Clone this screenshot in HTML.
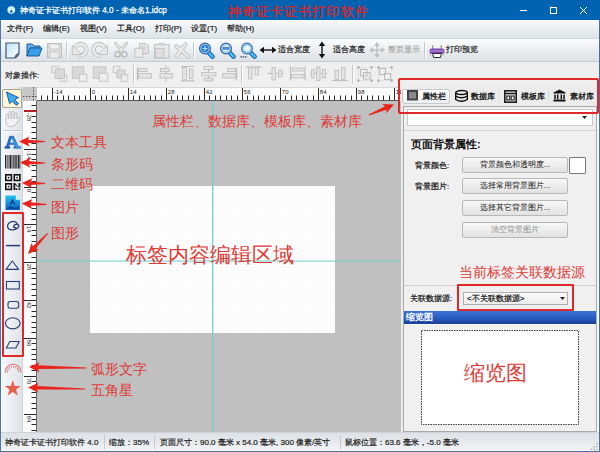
<!DOCTYPE html>
<html><head><meta charset="utf-8"><style>
*{margin:0;padding:0;box-sizing:border-box}
html,body{width:600px;height:452px;overflow:hidden;background:#f0f0f0;font-family:"Liberation Sans",sans-serif;color:#000}
.a{position:absolute}
.t{position:absolute;white-space:nowrap;line-height:1}
.red{color:#e2332d}
.u{-webkit-text-stroke:0.2px currentColor}
svg{position:absolute;overflow:visible}
</style></head><body>
<div class="a" style="left:0px;top:0px;width:600px;height:20px;background:#0063b1"></div>
<div class="a" style="left:0px;top:20px;width:1px;height:432px;background:#4f77a8"></div>
<div class="a" style="left:599px;top:20px;width:1px;height:432px;background:#45709f"></div>
<svg style="left:6px;top:4px" width="11" height="12" viewBox="0 0 11 12"><circle cx="5.3" cy="6" r="4.6" fill="#3f8fe0" opacity=".45"/><circle cx="5.3" cy="6" r="3.8" fill="#d6f3fd"/><path d="M5.3 5.2L7 8.4H3.6Z" fill="#1a5fae"/></svg>
<div class="t u" style="left:20px;top:6.6px;font-size:8.2px;color:#fff;-webkit-text-stroke:0.25px #fff">神奇证卡证书打印软件 4.0 - 未命名1.idcp</div>
<div class="t " style="left:228px;top:5.8px;font-size:12.8px;color:#cc2a30;letter-spacing:1.07px;-webkit-text-stroke:0.4px #cc2a30">神奇证卡证书打印软件</div>
<div class="a" style="left:520px;top:10px;width:7px;height:1px;background:#fff"></div>
<div class="a" style="left:550px;top:7px;width:7px;height:7px;border:1px solid #fff"></div>
<svg style="left:580px;top:7px" width="7" height="7" viewBox="0 0 7 7"><path d="M0 0L7 7M7 0L0 7" stroke="#fff" stroke-width="1"/></svg>
<div class="a" style="left:1px;top:20px;width:598px;height:19px;background:linear-gradient(#f7f9fb,#dfe4e8);border-bottom:1px solid #cfd5d9"></div>
<div class="t u" style="left:7px;top:25px;font-size:8px;color:#1a1a1a">文件(F)</div>
<div class="t u" style="left:43px;top:25px;font-size:8px;color:#1a1a1a">编辑(E)</div>
<div class="t u" style="left:80px;top:25px;font-size:8px;color:#1a1a1a">视图(V)</div>
<div class="t u" style="left:117px;top:25px;font-size:8px;color:#1a1a1a">工具(O)</div>
<div class="t u" style="left:155px;top:25px;font-size:8px;color:#1a1a1a">打印(P)</div>
<div class="t u" style="left:191px;top:25px;font-size:8px;color:#1a1a1a">设置(T)</div>
<div class="t u" style="left:227px;top:25px;font-size:8px;color:#1a1a1a">帮助(H)</div>
<div class="a" style="left:1px;top:39px;width:598px;height:23px;background:linear-gradient(#fbfcfd,#dce1e5);border-bottom:1px solid #c6cbcf"></div>
<svg style="left:5px;top:42px" width="16" height="17" viewBox="0 0 16 17"><defs><linearGradient id="gnd" x1="0" y1="0" x2="1" y2="1"><stop offset="0" stop-color="#bfe3fb"/><stop offset="1" stop-color="#fff"/></linearGradient></defs><path d="M1 1H14V11Q13 15 9 16H1Z" fill="url(#gnd)" stroke="#3d5878" stroke-width="1.2"/><path d="M14 11Q11 11 9 16Q12 14 14 11Z" fill="#3d5878"/></svg>
<svg style="left:26px;top:43px" width="17" height="14" viewBox="0 0 17 14"><path d="M1 1H6L8 3H14V5H4L1 13Z" fill="#5fb3f0" stroke="#1d5a9a" stroke-width="1"/><path d="M4 5H16L13 13H1Z" fill="#3aa0ec" stroke="#1d5a9a" stroke-width="1"/></svg>
<svg style="left:47px;top:43px" width="16" height="16" viewBox="0 0 16 16"><rect x="0.5" y="0.5" width="14" height="14" fill="#dcdcdc" stroke="#bdbdbd"/><rect x="3" y="1" width="9" height="5" fill="#f2f2f2" stroke="#c4c4c4" stroke-width=".8"/><rect x="3" y="9" width="9" height="6" fill="#ececec" stroke="#c4c4c4" stroke-width=".8"/></svg>
<div class="a" style="left:66px;top:42px;width:1px;height:17px;background:#c5c9ce;box-shadow:1px 0 0 #fff"></div>
<svg style="left:0px;top:0px" width="200" height="70" viewBox="0 0 200 70"><path d="M79.5 55.2A5.6 5.6 0 1 0 75.6 47.6" fill="none" stroke="#bdbdbd" stroke-width="4.6"/><path d="M79.5 55.2A5.6 5.6 0 1 0 75.6 47.6" fill="none" stroke="#e9e9e9" stroke-width="3"/><path d="M72.3 45.3V54.6H81.6Z" fill="#e9e9e9" stroke="#bdbdbd" stroke-width=".9" stroke-linejoin="round"/></svg>
<svg style="left:0px;top:0px" width="200" height="70" viewBox="0 0 200 70"><path d="M100.3 55.2A5.6 5.6 0 1 1 104.2 47.6" fill="none" stroke="#bdbdbd" stroke-width="4.6"/><path d="M100.3 55.2A5.6 5.6 0 1 1 104.2 47.6" fill="none" stroke="#e9e9e9" stroke-width="3"/><path d="M107.5 45.3V54.6H98.2Z" fill="#e9e9e9" stroke="#bdbdbd" stroke-width=".9" stroke-linejoin="round"/></svg>
<svg style="left:0px;top:0px" width="200" height="70" viewBox="0 0 200 70"><path d="M115.5 43.5L122.5 51.5M126.5 43.5L119.5 51.5" fill="none" stroke="#bdbdbd" stroke-width="3.2" stroke-linecap="round" stroke-linejoin="round"/><path d="M115.5 43.5L122.5 51.5M126.5 43.5L119.5 51.5" fill="none" stroke="#e9e9e9" stroke-width="1.6" stroke-linecap="round" stroke-linejoin="round"/><circle cx="117.6" cy="54.3" r="2.6" fill="#e9e9e9" stroke="#bdbdbd" stroke-width="1.5"/><circle cx="124.4" cy="54.3" r="2.6" fill="#e9e9e9" stroke="#bdbdbd" stroke-width="1.5"/></svg>
<svg style="left:0px;top:0px" width="200" height="70" viewBox="0 0 200 70"><path d="M139.5 43.5H146L148.5 46V53.5H139.5Z" fill="#e6e6e6" stroke="#bdbdbd" stroke-width=".9"/><rect x="141" y="45.5" width="5" height="6" fill="#dadada"/><path d="M134.8 48.3H142.8V57.3H134.8Z" fill="#ececec" stroke="#bdbdbd" stroke-width=".9"/></svg>
<svg style="left:0px;top:0px" width="200" height="70" viewBox="0 0 200 70"><rect x="154.5" y="44.5" width="14.5" height="13.5" fill="#e8e8e8" stroke="#bdbdbd" stroke-width=".9"/><rect x="158.5" y="42.8" width="6.5" height="2.6" fill="#cfcfcf"/><rect x="155.5" y="48.5" width="8.5" height="9" fill="#dedede" stroke="#bdbdbd" stroke-width=".8"/></svg>
<svg style="left:0px;top:0px" width="200" height="70" viewBox="0 0 200 70"><path d="M176.5 46.5Q182 50 188 56.5M185.5 44.5Q181 49 177 56" fill="none" stroke="#bdbdbd" stroke-width="4.2" stroke-linecap="round" stroke-linejoin="round"/><path d="M176.5 46.5Q182 50 188 56.5M185.5 44.5Q181 49 177 56" fill="none" stroke="#e9e9e9" stroke-width="2.6" stroke-linecap="round" stroke-linejoin="round"/></svg>
<div class="a" style="left:193px;top:42px;width:1px;height:17px;background:#c5c9ce;box-shadow:1px 0 0 #fff"></div>
<svg style="left:198px;top:42px" width="17" height="17" viewBox="0 0 17 17"><path d="M10.6 10.6L14.6 14.6" stroke="#1d5aa8" stroke-width="4.4" stroke-linecap="round"/><path d="M10.6 10.6L14.6 14.6" stroke="#3fc0f8" stroke-width="2.5" stroke-linecap="round"/><circle cx="7" cy="6.5" r="5.4" fill="#92d4f4" stroke="#3b5d9e" stroke-width="1.2"/><circle cx="7" cy="6.5" r="3.7" fill="#2b78d6"/><path d="M4.6 6.5H9.4M7 4.1V8.9" stroke="#b8e4ff" stroke-width="1.1"/></svg>
<svg style="left:219px;top:42px" width="17" height="17" viewBox="0 0 17 17"><path d="M10.6 10.6L14.6 14.6" stroke="#1d5aa8" stroke-width="4.4" stroke-linecap="round"/><path d="M10.6 10.6L14.6 14.6" stroke="#3fc0f8" stroke-width="2.5" stroke-linecap="round"/><circle cx="7" cy="6.5" r="5.4" fill="#a6dcf6" stroke="#3b5d9e" stroke-width="1.2"/><circle cx="7" cy="6.5" r="3.7" fill="#e4f4fd" stroke="#7cc4ec" stroke-width=".8"/><path d="M3.6 6H10.4" stroke="#1f4f9c" stroke-width="1.4"/><path d="M3.6 7.3H10.4" stroke="#3f9ee8" stroke-width="1.2"/></svg>
<svg style="left:240px;top:42px" width="17" height="17" viewBox="0 0 17 17"><path d="M10.6 10.6L14.6 14.6" stroke="#1d5aa8" stroke-width="4.4" stroke-linecap="round"/><path d="M10.6 10.6L14.6 14.6" stroke="#3fc0f8" stroke-width="2.5" stroke-linecap="round"/><circle cx="7" cy="6.5" r="5.4" fill="#a6dcf6" stroke="#3b6aa8" stroke-width="1.1"/><circle cx="7" cy="6.5" r="3.5" fill="#f4fbff" stroke="#6cb8e8" stroke-width=".8"/><path d="M0.5 14.8h1.4M2.8 14.8h1.4M5.2 14.8h1.4" stroke="#2c3c5c" stroke-width="1.3"/></svg>
<svg style="left:259px;top:46px" width="18" height="8" viewBox="0 0 18 8"><path d="M2 4H16" stroke="#111" stroke-width="1.4"/><path d="M0.5 4L5 0.8V7.2Z M17.5 4L13 0.8V7.2Z" fill="#111"/></svg>
<div class="t u" style="left:278px;top:46px;font-size:8px;color:#222">适合宽度</div>
<svg style="left:318px;top:41px" width="8" height="18" viewBox="0 0 8 18"><path d="M4 2V16" stroke="#111" stroke-width="1.4"/><path d="M4 0.5L0.8 5H7.2Z M4 17.5L0.8 13H7.2Z" fill="#111"/></svg>
<div class="t u" style="left:333px;top:46px;font-size:8px;color:#222">适合高度</div>
<svg style="left:369px;top:42px" width="16" height="16" viewBox="0 0 16 16"><path d="M8 1V15M1 8H15" stroke="#c2c2c2" stroke-width="1.6"/><path d="M8 0L5 4H11Z M8 16L5 12H11Z M0 8L4 5V11Z M16 8L12 5V11Z" fill="#c2c2c2"/></svg>
<div class="t u" style="left:388px;top:46px;font-size:8px;color:#a8a8a8">整页显示</div>
<div class="a" style="left:424px;top:42px;width:1px;height:17px;background:#c5c9ce;box-shadow:1px 0 0 #fff"></div>
<svg style="left:0px;top:0px" width="460" height="70" viewBox="0 0 460 70"><path d="M433 45.3V49M441 45.3V49" stroke="#333" stroke-width=".9"/><rect x="433.4" y="45.5" width="7.2" height="3.5" fill="#f4f4f4"/><rect x="429.5" y="48.6" width="15" height="5.4" rx="2.2" fill="#7a48b4"/><rect x="430.5" y="50.2" width="13" height="1.3" fill="#b58ae0"/><path d="M430 51.5Q429.3 54 431 55.5M444 51.5Q444.7 54 443 55.5" stroke="#aaa" stroke-width=".8" fill="none"/><path d="M432.6 53.5L433.6 57.5H440.4L441.4 53.5Z" fill="#fff" stroke="#2a2a2a" stroke-width="1"/></svg>
<div class="t u" style="left:446px;top:46px;font-size:8px;color:#222">打印预览</div>
<div class="a" style="left:1px;top:62px;width:598px;height:25px;background:#efefef"></div>
<div class="t u" style="left:5px;top:72px;font-size:8px;color:#222">对象操作:</div>
<svg style="left:0px;top:0px" width="140" height="90" viewBox="0 0 140 90"><rect x="51.8" y="66.3" width="6.5" height="6.5" fill="#eeeeee" stroke="#c3c3c3" stroke-width=".9"/><rect x="60.3" y="74.8" width="6.5" height="6.5" fill="#eeeeee" stroke="#c3c3c3" stroke-width=".9"/><rect x="55" y="69" width="9.5" height="9.5" fill="#d9d9d9" stroke="#c3c3c3" stroke-width=".9"/><rect x="72.3" y="66.8" width="11.5" height="11.5" fill="#d9d9d9" stroke="#c3c3c3" stroke-width=".9"/><rect x="79.3" y="74.3" width="7.5" height="7" fill="#eeeeee" stroke="#c3c3c3" stroke-width=".9"/><rect x="93.3" y="66.8" width="12.5" height="11.5" fill="#d9d9d9" stroke="#c3c3c3" stroke-width=".9"/><rect x="99.3" y="73.3" width="8.5" height="8" fill="#eeeeee" stroke="#c3c3c3" stroke-width=".9"/><rect x="113.3" y="66.3" width="6.5" height="6.5" fill="#eeeeee" stroke="#c3c3c3" stroke-width=".9"/><rect x="117" y="70" width="8" height="8" fill="#d9d9d9" stroke="#c3c3c3" stroke-width=".9"/><rect x="121.3" y="74.8" width="6.5" height="6.5" fill="#eeeeee" stroke="#c3c3c3" stroke-width=".9"/></svg>
<div class="a" style="left:133px;top:65px;width:1px;height:19px;background:#c5c9ce;box-shadow:1px 0 0 #fff"></div>
<svg style="left:0px;top:0px" width="400" height="90" viewBox="0 0 400 90"><path d="M137.5 67.5V80.5" stroke="#bdbdbd" stroke-width="1.2"/><rect x="138.5" y="68.5" width="8.5" height="3" fill="#e4e4e4" stroke="#c2c2c2" stroke-width=".9"/><rect x="138.5" y="73.5" width="13" height="4.5" fill="#e4e4e4" stroke="#c2c2c2" stroke-width=".9"/><path d="M166 66V81.5" stroke="#bdbdbd" stroke-width="1.2"/><rect x="160.5" y="68.5" width="9" height="3" fill="#e4e4e4" stroke="#c2c2c2" stroke-width=".9"/><rect x="160.0" y="73.5" width="12.5" height="4.5" fill="#e4e4e4" stroke="#c2c2c2" stroke-width=".9"/><path d="M181 66.5H194.5M181 80.8H194.5" stroke="#bdbdbd" stroke-width="1.2"/><rect x="182.5" y="67.5" width="4" height="12.5" fill="#e4e4e4" stroke="#c2c2c2" stroke-width=".9"/><rect x="189.5" y="69.0" width="3.5" height="9.5" fill="#e4e4e4" stroke="#c2c2c2" stroke-width=".9"/><path d="M208.5 65.5V81.5" stroke="#bdbdbd" stroke-width="1.2"/><rect x="204.0" y="66.5" width="9.0" height="3" fill="#e4e4e4" stroke="#c2c2c2" stroke-width=".9"/><rect x="201.5" y="72.5" width="14.5" height="3.5" fill="#e4e4e4" stroke="#c2c2c2" stroke-width=".9"/><rect x="204.0" y="78.5" width="9.0" height="2.5" fill="#e4e4e4" stroke="#c2c2c2" stroke-width=".9"/><path d="M236.5 67.5V80.5" stroke="#bdbdbd" stroke-width="1.2"/><rect x="227.5" y="68.5" width="8" height="3" fill="#e4e4e4" stroke="#c2c2c2" stroke-width=".9"/><rect x="222.5" y="73.5" width="13" height="4.5" fill="#e4e4e4" stroke="#c2c2c2" stroke-width=".9"/></svg>
<div class="a" style="left:241px;top:65px;width:1px;height:19px;background:#c5c9ce;box-shadow:1px 0 0 #fff"></div>
<svg style="left:0px;top:0px" width="400" height="90" viewBox="0 0 400 90"><path d="M246 67H261.5" stroke="#bdbdbd" stroke-width="1.2"/><rect x="248.5" y="68.0" width="3.5" height="11.0" fill="#e4e4e4" stroke="#c2c2c2" stroke-width=".9"/><rect x="255.0" y="68.0" width="3.5" height="7.0" fill="#e4e4e4" stroke="#c2c2c2" stroke-width=".9"/><path d="M267.5 73.5H283.5" stroke="#bdbdbd" stroke-width="1.2"/><rect x="272.0" y="67.5" width="3.5" height="12.5" fill="#e4e4e4" stroke="#c2c2c2" stroke-width=".9"/><rect x="278.5" y="70.0" width="3.5" height="7.0" fill="#e4e4e4" stroke="#c2c2c2" stroke-width=".9"/><path d="M290.5 66.5V80.5M305 66.5V80.5" stroke="#bdbdbd" stroke-width="1.2"/><rect x="292.5" y="68.0" width="10.5" height="3.0" fill="#e4e4e4" stroke="#c2c2c2" stroke-width=".9"/><rect x="291.5" y="74.5" width="12.5" height="3.5" fill="#e4e4e4" stroke="#c2c2c2" stroke-width=".9"/><path d="M310.5 73.5H327" stroke="#bdbdbd" stroke-width="1.2"/><rect x="311.5" y="69.5" width="2.5" height="8.5" fill="#e4e4e4" stroke="#c2c2c2" stroke-width=".9"/><rect x="316.5" y="67.0" width="3.5" height="13.5" fill="#e4e4e4" stroke="#c2c2c2" stroke-width=".9"/><rect x="322.5" y="69.5" width="3" height="8.5" fill="#e4e4e4" stroke="#c2c2c2" stroke-width=".9"/><path d="M332 80.5H347.5" stroke="#bdbdbd" stroke-width="1.2"/><rect x="335.0" y="70.5" width="3.5" height="9" fill="#e4e4e4" stroke="#c2c2c2" stroke-width=".9"/><rect x="341.5" y="67.5" width="3.5" height="12" fill="#e4e4e4" stroke="#c2c2c2" stroke-width=".9"/></svg>
<div class="a" style="left:352px;top:65px;width:1px;height:19px;background:#c5c9ce;box-shadow:1px 0 0 #fff"></div>
<svg style="left:357px;top:66px" width="16" height="16" viewBox="0 0 16 16"><rect x="1.5" y="1.5" width="13" height="13" fill="none" stroke="#cfcfcf" stroke-width=".8" stroke-dasharray="1.2 1.2"/><rect x="3.5" y="3.5" width="6.5" height="6.5" fill="none" stroke="#b5b5b5" stroke-width=".9"/><rect x="6.5" y="6.5" width="6.5" height="6.5" fill="none" stroke="#b5b5b5" stroke-width=".9"/><rect x="0.3" y="0.3" width="2.2" height="2.2" fill="#a8a8a8"/><rect x="13.5" y="0.3" width="2.2" height="2.2" fill="#a8a8a8"/><rect x="0.3" y="13.5" width="2.2" height="2.2" fill="#a8a8a8"/><rect x="13.5" y="13.5" width="2.2" height="2.2" fill="#a8a8a8"/></svg>
<svg style="left:377px;top:66px" width="16" height="16" viewBox="0 0 16 16"><rect x="1.5" y="1.5" width="13" height="13" fill="none" stroke="#cfcfcf" stroke-width=".8" stroke-dasharray="1.2 1.2"/><rect x="2.5" y="2.5" width="6" height="6" fill="none" stroke="#b5b5b5" stroke-width=".9"/><rect x="7.5" y="7.5" width="6" height="6" fill="none" stroke="#b5b5b5" stroke-width=".9"/><rect x="0.3" y="0.3" width="2.2" height="2.2" fill="#a8a8a8"/><rect x="13.5" y="0.3" width="2.2" height="2.2" fill="#a8a8a8"/><rect x="0.3" y="13.5" width="2.2" height="2.2" fill="#a8a8a8"/><rect x="13.5" y="13.5" width="2.2" height="2.2" fill="#a8a8a8"/></svg>
<div class="a" style="left:37px;top:87px;width:362px;height:14px;background:#fff;border-top:1px solid #d8d8d8"></div>
<div class="a" style="left:23px;top:101px;width:14px;height:331px;background:#fff"></div>
<div class="a" style="left:23px;top:87px;width:14px;height:14px;background:#c8c8c8"></div>
<svg style="left:23px;top:87px" width="14" height="14" viewBox="0 0 14 14"><path d="M10.5 0V14" stroke="#555" stroke-width="1" stroke-dasharray="1.5 1.5"/><path d="M0 9.5H14" stroke="#555" stroke-width="1" stroke-dasharray="1.5 1.5"/></svg>
<svg style="left:37px;top:87px" width="362" height="14" viewBox="0 0 362 14"><path d="M4.50 8.5V13M10.50 8.5V13M15.50 1V13M20.50 8.5V13M26.50 8.5V13M31.50 8.5V13M37.50 8.5V13M42.50 8.5V13M48.50 8.5V13M53.50 1V13M58.50 8.5V13M64.50 8.5V13M69.50 8.5V13M75.50 8.5V13M80.50 8.5V13M86.50 8.5V13M91.50 1V13M96.50 8.5V13M102.50 8.5V13M107.50 8.5V13M113.50 8.5V13M118.50 8.5V13M124.50 8.5V13M129.50 1V13M134.50 8.5V13M140.50 8.5V13M145.50 8.5V13M151.50 8.5V13M156.50 8.5V13M162.50 8.5V13M167.50 1V13M172.50 8.5V13M178.50 8.5V13M183.50 8.5V13M189.50 8.5V13M194.50 8.5V13M200.50 8.5V13M205.50 1V13M210.50 8.5V13M216.50 8.5V13M221.50 8.5V13M227.50 8.5V13M232.50 8.5V13M238.50 8.5V13M243.50 1V13M248.50 8.5V13M254.50 8.5V13M259.50 8.5V13M265.50 8.5V13M270.50 8.5V13M276.50 8.5V13M281.50 1V13M286.50 8.5V13M292.50 8.5V13M297.50 8.5V13M303.50 8.5V13M308.50 8.5V13M314.50 8.5V13M319.50 1V13M324.50 8.5V13M330.50 8.5V13M335.50 8.5V13M341.50 8.5V13M346.50 8.5V13M352.50 8.5V13M357.50 1V13" stroke="#2a2a2a" stroke-width="1"/><path d="M0 13.5H362" stroke="#555" stroke-width="1"/><text x="16.80" y="7.2" font-size="6" fill="#1a1a1a" font-family="Liberation Sans">-14</text><text x="54.80" y="7.2" font-size="6" fill="#1a1a1a" font-family="Liberation Sans">0</text><text x="92.80" y="7.2" font-size="6" fill="#1a1a1a" font-family="Liberation Sans">14</text><text x="130.80" y="7.2" font-size="6" fill="#1a1a1a" font-family="Liberation Sans">28</text><text x="168.80" y="7.2" font-size="6" fill="#1a1a1a" font-family="Liberation Sans">42</text><text x="206.80" y="7.2" font-size="6" fill="#1a1a1a" font-family="Liberation Sans">56</text><text x="244.80" y="7.2" font-size="6" fill="#1a1a1a" font-family="Liberation Sans">70</text><text x="282.80" y="7.2" font-size="6" fill="#1a1a1a" font-family="Liberation Sans">84</text><text x="320.80" y="7.2" font-size="6" fill="#1a1a1a" font-family="Liberation Sans">98</text><text x="358.80" y="7.2" font-size="6" fill="#1a1a1a" font-family="Liberation Sans">112</text></svg>
<svg style="left:23px;top:101px" width="14" height="331" viewBox="0 0 14 331"><path d="M8.5 4.50H13M1 10.50H13M8.5 15.50H13M8.5 21.50H13M8.5 26.50H13M8.5 31.50H13M8.5 37.50H13M8.5 42.50H13M1 48.50H13M8.5 53.50H13M8.5 58.50H13M8.5 64.50H13M8.5 69.50H13M8.5 75.50H13M8.5 80.50H13M1 86.50H13M8.5 91.50H13M8.5 96.50H13M8.5 102.50H13M8.5 107.50H13M8.5 113.50H13M8.5 118.50H13M1 123.50H13M8.5 129.50H13M8.5 134.50H13M8.5 140.50H13M8.5 145.50H13M8.5 150.50H13M8.5 156.50H13M1 161.50H13M8.5 167.50H13M8.5 172.50H13M8.5 177.50H13M8.5 183.50H13M8.5 188.50H13M8.5 194.50H13M1 199.50H13M8.5 204.50H13M8.5 210.50H13M8.5 215.50H13M8.5 221.50H13M8.5 226.50H13M8.5 231.50H13M1 237.50H13M8.5 242.50H13M8.5 248.50H13M8.5 253.50H13M8.5 258.50H13M8.5 264.50H13M8.5 269.50H13M1 275.50H13M8.5 280.50H13M8.5 286.50H13M8.5 291.50H13M8.5 296.50H13M8.5 302.50H13M8.5 307.50H13M1 313.50H13M8.5 318.50H13M8.5 323.50H13M8.5 329.50H13" stroke="#2a2a2a" stroke-width="1"/><path d="M13.5 0V331" stroke="#666"/><text transform="translate(3.6 11.70) rotate(90)" font-size="6" fill="#1a1a1a" font-family="Liberation Sans">-28</text><text transform="translate(3.6 49.70) rotate(90)" font-size="6" fill="#1a1a1a" font-family="Liberation Sans">-14</text><text transform="translate(3.6 87.70) rotate(90)" font-size="6" fill="#1a1a1a" font-family="Liberation Sans">0</text><text transform="translate(3.6 124.70) rotate(90)" font-size="6" fill="#1a1a1a" font-family="Liberation Sans">14</text><text transform="translate(3.6 162.70) rotate(90)" font-size="6" fill="#1a1a1a" font-family="Liberation Sans">28</text><text transform="translate(3.6 200.70) rotate(90)" font-size="6" fill="#1a1a1a" font-family="Liberation Sans">42</text><text transform="translate(3.6 238.70) rotate(90)" font-size="6" fill="#1a1a1a" font-family="Liberation Sans">56</text><text transform="translate(3.6 276.70) rotate(90)" font-size="6" fill="#1a1a1a" font-family="Liberation Sans">70</text><text transform="translate(3.6 314.70) rotate(90)" font-size="6" fill="#1a1a1a" font-family="Liberation Sans">84</text></svg>
<div class="a" style="left:24px;top:110px;width:13px;height:2px;background:#b02020"></div>
<div class="a" style="left:1px;top:87px;width:22px;height:345px;background:linear-gradient(90deg,#f7f9fb,#dee3e9);border-right:1px solid #cdd2d8"></div>
<div class="a" style="left:2px;top:89px;width:20px;height:19px;background:#fcf5da;border:1px solid #aca58f;border-radius:1px"></div>
<svg style="left:0px;top:0px" width="30" height="120" viewBox="0 0 30 120"><path d="M6.5 92L18.5 97.6L14.6 99.6L18.6 103.6L16.4 105.3L12.4 101.3L9.6 103.6Z" fill="#3eaaf0" stroke="#1b5c9e" stroke-width="1" stroke-linejoin="round"/></svg>
<svg style="left:0px;top:0px" width="30" height="140" viewBox="0 0 30 140"><path d="M7.2 120V115M10 119V112.6M12.9 119V112.3M15.7 120V114" stroke="#c0c2c5" stroke-width="3" stroke-linecap="round"/><path d="M17 121.5L19 118.3" stroke="#c0c2c5" stroke-width="3" stroke-linecap="round"/><path d="M5.8 118.5H17.2L19 118.5L16 124Q14.5 126.8 11.2 126.8Q5.8 126.8 5.8 121.5Z" fill="#f1f2f3" stroke="#c0c2c5" stroke-width="1"/><path d="M7.2 120V115M10 119V112.6M12.9 119V112.3M15.7 120V114M17 121.5L19 118.3" stroke="#f1f2f3" stroke-width="1.2" stroke-linecap="round"/></svg>
<div class="a" style="left:3px;top:130px;width:19px;height:1px;background:#c6cbd1;box-shadow:0 1px 0 #fbfbfb"></div>
<svg style="left:0px;top:0px" width="30" height="160" viewBox="0 0 30 160"><defs><linearGradient id="ga" x1="0" y1="0" x2="1" y2="0"><stop offset="0" stop-color="#1a4fb8"/><stop offset="1" stop-color="#40b8f4"/></linearGradient></defs><path d="M9.6 136.3H13.6L18.3 146.6H20.6V148.3H13.8V146.6H15.3L14.3 144.4H9.3L8.4 146.6H10V148.3H4.9V146.6H6.4Z" fill="url(#ga)" stroke="#123f94" stroke-width=".5"/><path d="M10 142.6H13.6L11.8 138.6Z" fill="#f2f4f7"/></svg>
<svg style="left:5px;top:155px" width="16" height="14" viewBox="0 0 16 14"><rect x="0" y="0" width="1.2" height="13.5" fill="#2a2a2a"/><rect x="1.2" y="0" width="1.3" height="13.5" fill="#9a9a9a"/><rect x="2.5" y="0" width="1" height="13.5" fill="#333"/><rect x="3.5" y="0" width="1.5" height="13.5" fill="#8a8a8a"/><rect x="5" y="0" width="1.6" height="13.5" fill="#222"/><rect x="6.6" y="0" width="1.2" height="13.5" fill="#a0a0a0"/><rect x="7.8" y="0" width="1" height="13.5" fill="#333"/><rect x="8.8" y="0" width="1.6" height="13.5" fill="#7e7e7e"/><rect x="10.4" y="0" width="1.4" height="13.5" fill="#2a2a2a"/><rect x="11.8" y="0" width="1.2" height="13.5" fill="#9c9c9c"/><rect x="13" y="0" width="1" height="13.5" fill="#333"/><rect x="14" y="0" width="1.5" height="13.5" fill="#6a6a6a"/></svg>
<svg style="left:5px;top:174px" width="16" height="16" viewBox="0 0 16 16"><rect x="0.8" y="0.8" width="5.6" height="5.6" fill="#fff" stroke="#111" stroke-width="1.6"/><rect x="2.8" y="2.8" width="1.6" height="1.6" fill="#111"/><rect x="9.3" y="0.8" width="5.6" height="5.6" fill="#fff" stroke="#111" stroke-width="1.6"/><rect x="11.3" y="2.8" width="1.6" height="1.6" fill="#111"/><rect x="0.8" y="9.8" width="5.6" height="5.6" fill="#fff" stroke="#111" stroke-width="1.6"/><rect x="2.8" y="11.8" width="1.6" height="1.6" fill="#111"/><path d="M8.5 9H10.2V16H8.5ZM10.2 9.3L13.5 13V9H15.3V13.5H13.6L10.2 10.8Z" fill="#111"/><rect x="10.5" y="14.3" width="1.7" height="1.7" fill="#111"/><rect x="13.5" y="14.3" width="1.7" height="1.7" fill="#111"/></svg>
<svg style="left:5px;top:194.7px" width="16" height="16" viewBox="0 0 16 16"><defs><linearGradient id="gi" x1="0" y1="0" x2="0" y2="1"><stop offset="0" stop-color="#22c4f2"/><stop offset="1" stop-color="#0f5fc0"/></linearGradient></defs><path d="M0.5 0.5H10.8L15 4.7V15H0.5Z" fill="url(#gi)"/><path d="M10.8 0.5V4.7H15Z" fill="#e9f6fd"/><path d="M4.5 9.5L7.5 3.5L10.5 9.5H8.8L7.5 6.8L6.2 9.5Z" fill="#0b3f8f"/><path d="M1.5 13.5Q5 10 8 12T14 11V14H1.5Z" fill="#0b3f8f" opacity=".8"/></svg>
<div class="a" style="left:2px;top:212px;width:22px;height:145px;border:2px solid #e0282a;border-radius:1px"></div>
<svg style="left:0px;top:0px" width="30" height="360" viewBox="0 0 30 360"><path d="M17.2 223.2Q14.5 220.6 11 221.8Q7.2 223.3 7.6 226.6Q8.2 230 12.2 229.8Q17 229.5 18.6 226.8Q19.5 224.6 16.8 224.3Q13.8 224.2 13.6 226.6Q13.8 228 15.6 227.6" fill="none" stroke="#2b3d72" stroke-width="1.3" stroke-linecap="round"/><path d="M5.8 245.6H20" stroke="#2b3d72" stroke-width="1.5"/><path d="M12.3 261L18.6 269.4H6Z" fill="none" stroke="#2b3d72" stroke-width="1.1" stroke-linejoin="round"/><rect x="6.5" y="281.5" width="12.8" height="7.5" fill="none" stroke="#2b3d72" stroke-width="1.1"/><rect x="8" y="301.5" width="10.7" height="6.8" rx="2.2" fill="none" stroke="#2b3d72" stroke-width="1.1"/><ellipse cx="12.75" cy="323.3" rx="7.3" ry="5.6" fill="none" stroke="#2b3d72" stroke-width="1.1"/><path d="M9.8 341.5H19.3L15.8 348H6.3Z" fill="none" stroke="#2b3d72" stroke-width="1.1" stroke-linejoin="round"/></svg>
<svg style="left:0px;top:0px" width="30" height="400" viewBox="0 0 30 400"><path d="M5.2 372.6A7.9 8.4 0 0 1 21 372.6" fill="none" stroke="#e26a6a" stroke-width="1.1"/><path d="M7.3 372.8A5.6 6 0 0 1 18.9 372.8" fill="none" stroke="#e26a6a" stroke-width="1.4" stroke-dasharray="1.2 1.1"/></svg>
<svg style="left:0px;top:0px" width="30" height="400" viewBox="0 0 30 400"><path d="M12.75 380.3L14.8 385.9H20.8L16 389.4L17.8 395.6L12.75 391.9L7.7 395.6L9.5 389.4L4.7 385.9H10.7Z" fill="#e8604a"/></svg>
<div class="a" style="left:37px;top:101px;width:364px;height:331px;background:#c0c0c0"></div>
<div class="a" style="left:90px;top:186px;width:245px;height:147px;background-color:#fff;background-image:linear-gradient(90deg,rgba(200,200,200,.06) 1px,transparent 1px),linear-gradient(rgba(200,200,200,.06) 1px,transparent 1px);background-size:3px 3px"></div>
<div class="a" style="left:212px;top:101px;width:1px;height:331px;background:#78cdd8"></div>
<div class="a" style="left:213px;top:101px;width:1px;height:331px;background:rgba(110,205,215,.35)"></div>
<div class="a" style="left:37px;top:260px;width:364px;height:1px;background:rgba(110,205,205,.45)"></div>
<div class="a" style="left:37px;top:261px;width:364px;height:1px;background:rgba(110,205,205,.55)"></div>
<div class="t " style="left:126px;top:244px;font-size:21px;color:#e03a36">标签内容编辑区域</div>
<div class="a" style="left:401px;top:87px;width:198px;height:345px;background:#ececec"></div>
<div class="a" style="left:402px;top:89px;width:48px;height:15px;background:linear-gradient(#fdfdfd,#eceff2);border:1px solid #c6cacf;border-radius:2px"></div>
<svg style="left:407px;top:90px" width="12" height="11" viewBox="0 0 12 11"><rect x="0" y="0" width="11" height="10.5" fill="#444"/><rect x="2" y="2" width="7" height="6.5" fill="#8a8a8a"/></svg>
<div class="t u" style="left:422px;top:91.7px;font-size:8.3px;color:#111;-webkit-text-stroke:0.3px #111">属性栏</div>
<svg style="left:455px;top:90px" width="13" height="12" viewBox="0 0 13 12"><ellipse cx="6.5" cy="2.5" rx="5.8" ry="2" fill="none" stroke="#111" stroke-width="1.4"/><path d="M0.7 2.5V9.5Q6.5 13 12.3 9.5V2.5M0.7 6Q6.5 9.5 12.3 6" fill="none" stroke="#111" stroke-width="1.4"/></svg>
<div class="t u" style="left:471px;top:91.7px;font-size:8.3px;color:#111;-webkit-text-stroke:0.3px #111">数据库</div>
<div class="a" style="left:499px;top:90px;width:1px;height:12px;background:#dcdcdc"></div>
<svg style="left:504px;top:90px" width="13" height="13" viewBox="0 0 13 13"><rect x="0.8" y="0.8" width="11.4" height="11.4" fill="none" stroke="#111" stroke-width="1.5"/><path d="M1 3.5H12" stroke="#111" stroke-width="1.5"/><rect x="2.8" y="6" width="3" height="4" fill="none" stroke="#111" stroke-width="1"/><rect x="7.2" y="6" width="3" height="4" fill="none" stroke="#111" stroke-width="1"/></svg>
<div class="t u" style="left:521px;top:91.7px;font-size:8.3px;color:#111;-webkit-text-stroke:0.3px #111">模板库</div>
<div class="a" style="left:548px;top:90px;width:1px;height:12px;background:#dcdcdc"></div>
<svg style="left:553px;top:89px" width="13" height="13" viewBox="0 0 13 13"><path d="M6.5 0.5L0.5 3.5V4.5H12.5V3.5Z" fill="#111"/><path d="M2 5.5V10M4.7 5.5V10M8.3 5.5V10M11 5.5V10" stroke="#111" stroke-width="1.5"/><rect x="0.5" y="10.5" width="12" height="2" fill="#111"/></svg>
<div class="t u" style="left:570px;top:91.7px;font-size:8.3px;color:#111;-webkit-text-stroke:0.3px #111">素材库</div>
<div class="a" style="left:597px;top:87px;width:2px;height:345px;background:#f7fafb"></div>
<div class="a" style="left:403px;top:106px;width:194px;height:326px;background:#f0f0f0;border:1px solid #a9a9a9"></div>
<div class="a" style="left:407px;top:109px;width:186px;height:17px;background:#fff;border:1px solid #c9c9c9"></div>
<div class="a" style="left:398px;top:78px;width:201px;height:36px;border:2px solid #e0282a;border-radius:2px"></div>
<svg style="left:582px;top:116px" width="5" height="3" viewBox="0 0 5 3"><path d="M0 0H5L2.5 3Z" fill="#222"/></svg>
<div class="a" style="left:404px;top:130px;width:192px;height:1px;background:#d8d8d8"></div>
<div class="t b" style="left:411px;top:139px;font-size:11px;font-weight:bold;color:#111">页面背景属性:</div>
<div class="t u" style="left:415px;top:162px;font-size:8px;color:#111">背景颜色:</div>
<div class="t u" style="left:415px;top:183px;font-size:8px;color:#111">背景图片:</div>
<div class="a" style="left:462px;top:157px;width:106px;height:16px;background:linear-gradient(#f8f8f8,#e2e2e2);border:1px solid #b8b8b8;border-radius:2px"></div>
<div class="t" style="left:462px;top:161px;width:106px;text-align:center;font-size:8px;color:#111">背景颜色和透明度...</div>
<div class="a" style="left:569px;top:157px;width:17px;height:17px;background:#fff;border:1px solid #777;border-radius:1px"></div>
<div class="a" style="left:462px;top:178px;width:106px;height:16px;background:linear-gradient(#f8f8f8,#e2e2e2);border:1px solid #b8b8b8;border-radius:2px"></div>
<div class="t" style="left:462px;top:182px;width:106px;text-align:center;font-size:8px;color:#111">选择常用背景图片...</div>
<div class="a" style="left:462px;top:200px;width:106px;height:16px;background:linear-gradient(#f8f8f8,#e2e2e2);border:1px solid #b8b8b8;border-radius:2px"></div>
<div class="t" style="left:462px;top:204px;width:106px;text-align:center;font-size:8px;color:#111">选择其它背景图片...</div>
<div class="a" style="left:462px;top:222px;width:106px;height:16px;background:linear-gradient(#f8f8f8,#e2e2e2);border:1px solid #b8b8b8;border-radius:2px"></div>
<div class="t" style="left:462px;top:226px;width:106px;text-align:center;font-size:8px;color:#8c8c8c">清空背景图片</div>
<div class="a" style="left:404px;top:285px;width:192px;height:1px;background:#d0d0d0"></div>
<div class="t " style="left:459px;top:265.8px;font-size:13.8px;color:#dc3a36">当前标签关联数据源</div>
<div class="t u" style="left:410px;top:295px;font-size:8px;color:#111">关联数据源:</div>
<div class="a" style="left:463px;top:292px;width:105px;height:13px;background:linear-gradient(#fcfcfc,#ececec);border:1px solid #adadad"></div>
<div class="t u" style="left:467px;top:295px;font-size:8px;color:#111">&lt;不关联数据源&gt;</div>
<svg style="left:560px;top:297px" width="5" height="3" viewBox="0 0 5 3"><path d="M0 0H5L2.5 3Z" fill="#222"/></svg>
<div class="a" style="left:404px;top:311px;width:192px;height:13px;background:linear-gradient(#3a72d2,#2a5cc0 55%,#173e94)"></div>
<div class="a" style="left:457px;top:284px;width:117px;height:27px;border:2px solid #e0282a;border-radius:1px"></div>
<div class="t u" style="left:406px;top:313.3px;font-size:8.5px;color:#fff;-webkit-text-stroke:0.3px #fff">缩览图</div>
<div class="a" style="left:404px;top:324px;width:192px;height:1px;background:#fbfbfb"></div>
<svg style="left:421px;top:330px" width="158" height="95" viewBox="0 0 158 95"><rect x="0.5" y="0.5" width="157" height="94" fill="#fff" stroke="#3a3a3a" stroke-dasharray="1.5 1"/></svg>
<div class="t " style="left:464px;top:363px;font-size:20.7px;color:#e03a36">缩览图</div>
<svg style="left:0;top:0" width="600" height="452"><path d="M45.00 141.00 L28.00 139.70 L29.50 136.50 L19.00 141.50 L29.50 146.50 L28.00 143.30 L45.00 142.00Z" fill="#e8241c"/></svg>
<svg style="left:0;top:0" width="600" height="452"><path d="M45.01 162.50 L29.03 160.88 L30.60 157.71 L20.00 162.50 L30.40 167.71 L28.96 164.48 L44.99 163.50Z" fill="#e8241c"/></svg>
<svg style="left:0;top:0" width="600" height="452"><path d="M45.01 183.00 L30.84 181.39 L32.41 178.23 L21.80 183.00 L32.19 188.23 L30.76 184.99 L44.99 184.00Z" fill="#e8241c"/></svg>
<svg style="left:0;top:0" width="600" height="452"><path d="M46.52 204.00 L30.86 202.13 L32.48 198.99 L21.80 203.60 L32.11 208.98 L30.73 205.73 L46.48 205.00Z" fill="#e8241c"/></svg>
<svg style="left:0;top:0" width="600" height="452"><path d="M47.64 232.66 L32.90 246.24 L31.62 242.95 L28.00 254.00 L38.86 249.84 L35.51 248.72 L48.36 233.34Z" fill="#e8241c"/></svg>
<svg style="left:0;top:0" width="600" height="452"><path d="M86.51 367.50 L38.03 365.36 L39.59 362.18 L29.00 367.00 L39.41 372.18 L37.97 368.96 L86.49 368.50Z" fill="#e8241c"/></svg>
<svg style="left:0;top:0" width="600" height="452"><path d="M85.01 388.50 L37.04 385.94 L38.63 382.78 L28.00 387.50 L38.36 392.77 L36.95 389.54 L84.99 389.50Z" fill="#e8241c"/></svg>
<svg style="left:0;top:0" width="600" height="452"><path d="M369.19 115.46 L386.40 109.64 L386.26 113.18 L394.00 104.50 L382.38 103.96 L385.01 106.33 L368.81 114.54Z" fill="#e8241c"/></svg>
<div class="t " style="left:50.5px;top:136.3px;font-size:13.5px;color:#dc3a36">文本工具</div>
<div class="t " style="left:50.5px;top:158px;font-size:13.5px;color:#dc3a36">条形码</div>
<div class="t " style="left:50.5px;top:178px;font-size:13.5px;color:#dc3a36">二维码</div>
<div class="t " style="left:50.5px;top:200.5px;font-size:13.5px;color:#dc3a36">图片</div>
<div class="t " style="left:50.5px;top:227px;font-size:13.5px;color:#dc3a36">图形</div>
<div class="t " style="left:91px;top:361.8px;font-size:14px;color:#dc3a36">弧形文字</div>
<div class="t " style="left:91px;top:383px;font-size:14px;color:#e03a36">五角星</div>
<div class="t " style="left:151.8px;top:115.2px;font-size:13.65px;color:#dc3a36">属性栏、数据库、模板库、素材库</div>
<div class="a" style="left:0px;top:432px;width:600px;height:20px;background:linear-gradient(#dde1e5,#f3f5f6);border-top:1px solid #d0d4d8"></div>
<div class="a" style="left:0px;top:450px;width:600px;height:1px;background:#fafcfd"></div>
<div class="a" style="left:0px;top:451px;width:600px;height:1px;background:#45709f"></div>
<div class="a" style="left:0px;top:432px;width:1px;height:20px;background:#4f77a8"></div>
<div class="a" style="left:599px;top:432px;width:1px;height:20px;background:#45709f"></div>
<div class="t u" style="left:5px;top:438.7px;font-size:8px;color:#222">神奇证卡证书打印软件 4.0</div>
<div class="a" style="left:104px;top:435px;width:1px;height:14px;background:#c8ccd0"></div>
<div class="t u" style="left:109px;top:438.7px;font-size:8px;color:#222">缩放：35%</div>
<div class="a" style="left:154px;top:435px;width:1px;height:14px;background:#c8ccd0"></div>
<div class="t u" style="left:160px;top:438.7px;font-size:8px;color:#222">页面尺寸：90.0 毫米 x 54.0 毫米, 300 像素/英寸</div>
<div class="a" style="left:340px;top:435px;width:1px;height:14px;background:#c8ccd0"></div>
<div class="t u" style="left:345px;top:438.7px;font-size:8px;color:#222">鼠标位置：63.6 毫米，-5.0 毫米</div>
<svg style="left:588px;top:441px" width="10" height="10" viewBox="0 0 10 10"><g fill="#a9afb4"><rect x="8" y="2" width="1.5" height="1.5"/><rect x="5.3" y="5" width="1.5" height="1.5"/><rect x="8" y="5" width="1.5" height="1.5"/><rect x="2.6" y="7.6" width="1.5" height="1.5"/><rect x="5.3" y="7.6" width="1.5" height="1.5"/><rect x="8" y="7.6" width="1.5" height="1.5"/></g></svg>
</body></html>
